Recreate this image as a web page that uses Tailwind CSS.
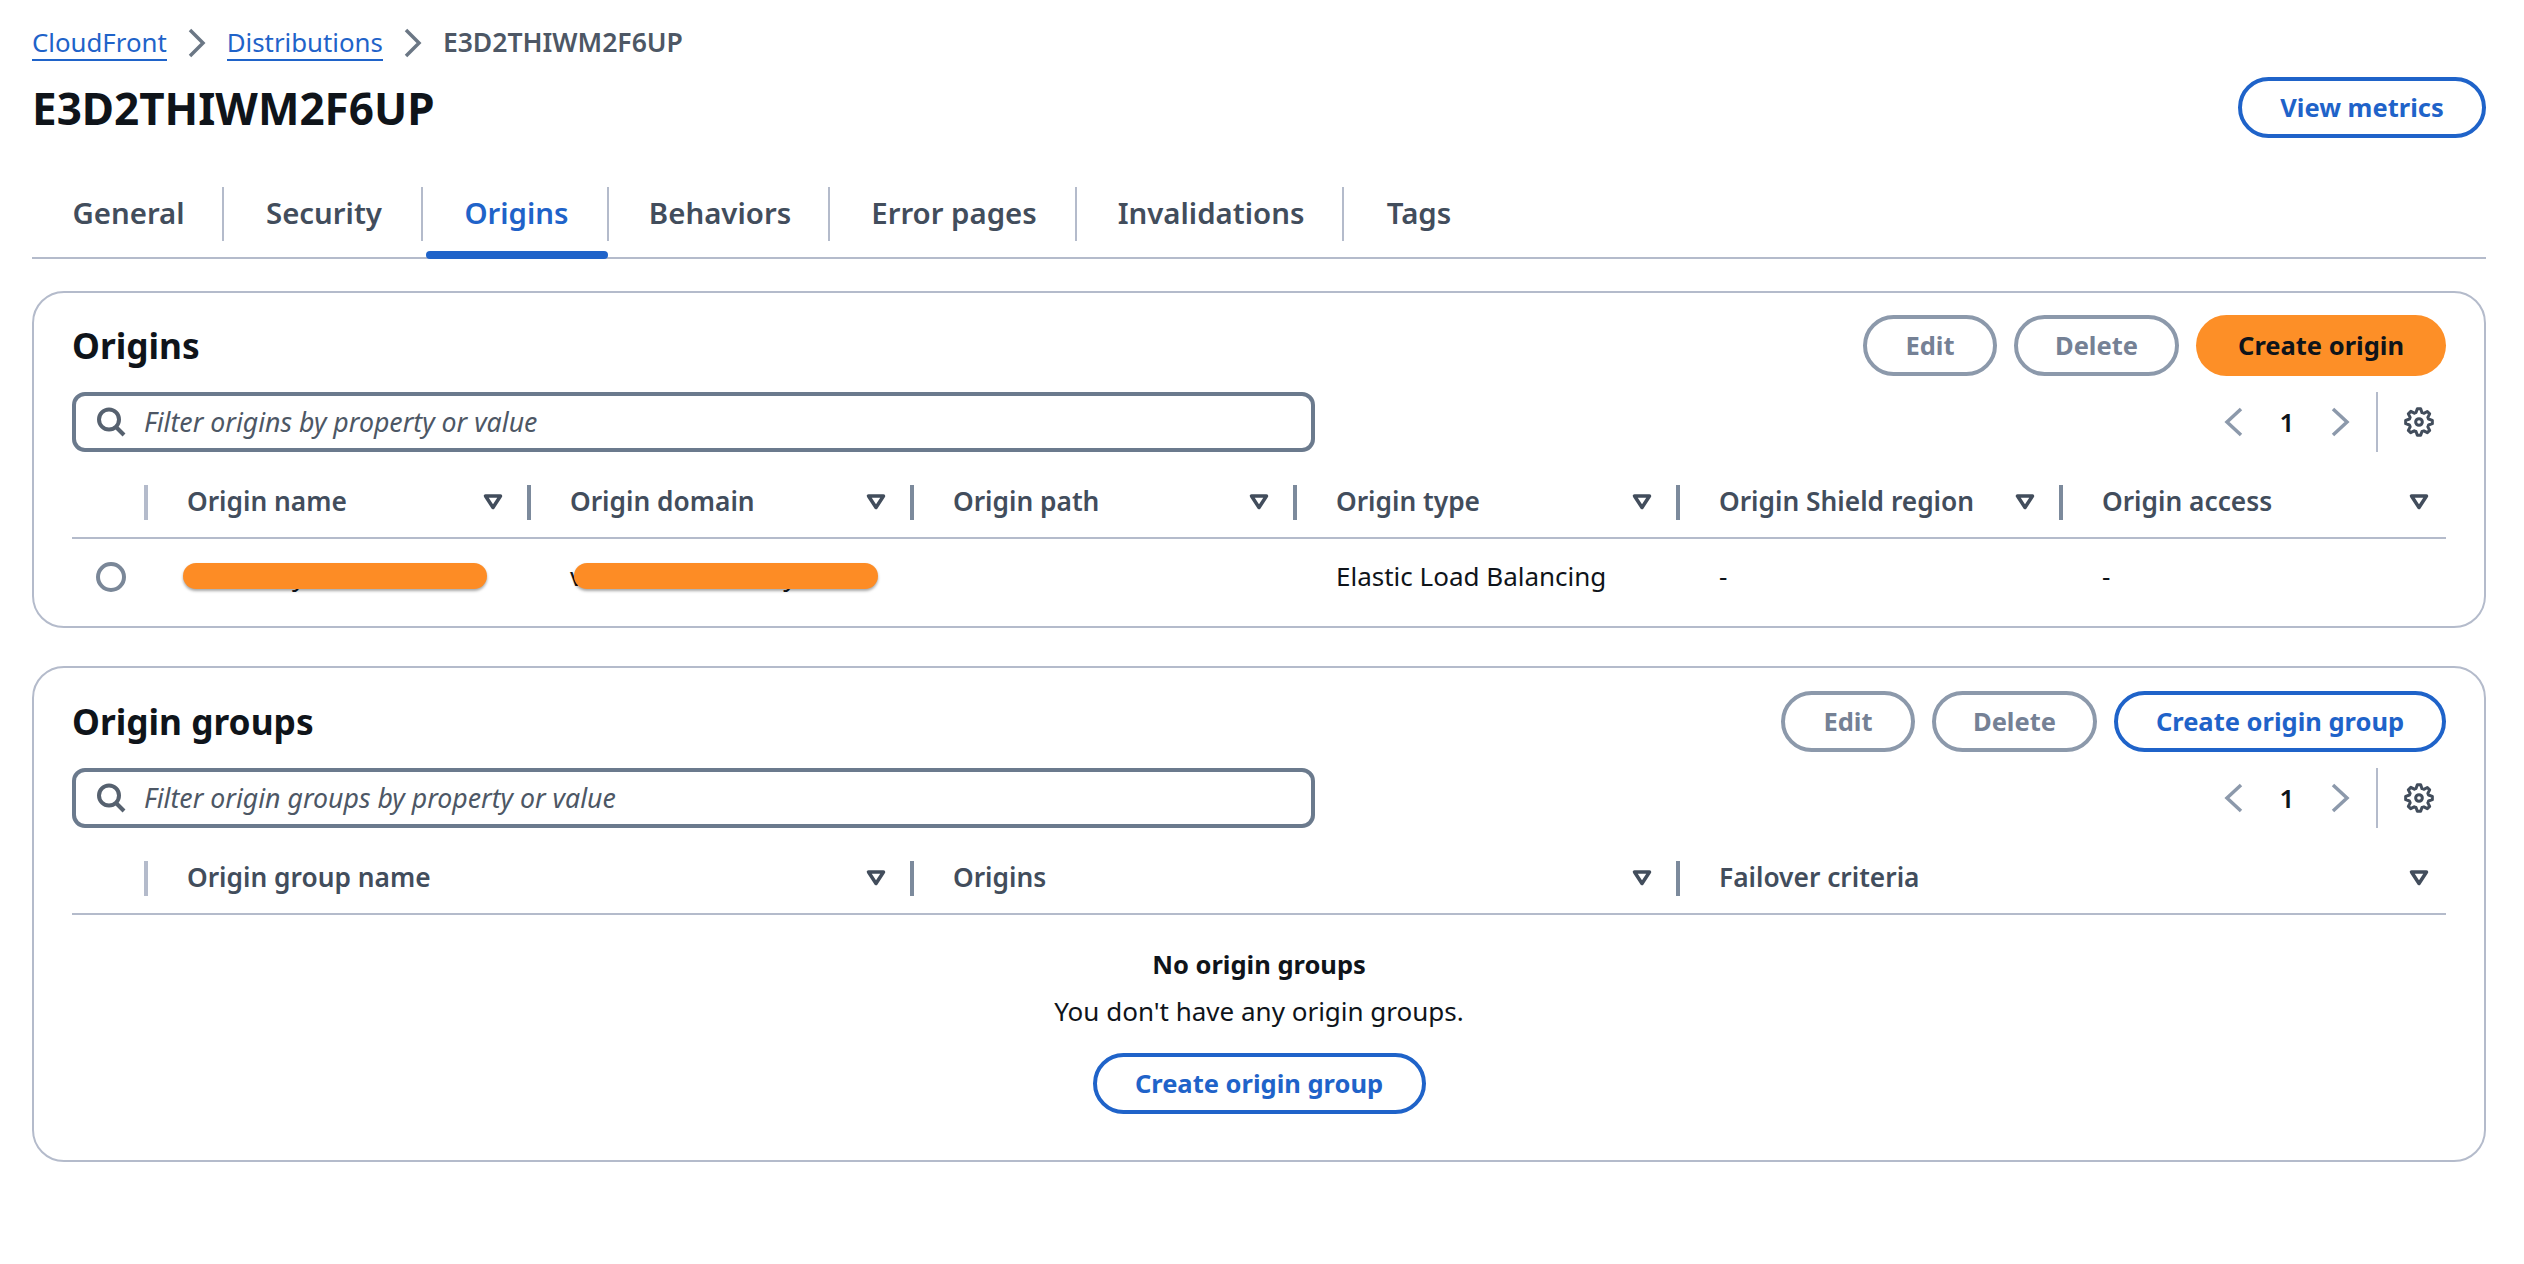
<!DOCTYPE html>
<html lang="en">
<head>
  <meta charset="UTF-8" />
  <title>E3D2THIWM2F6UP - CloudFront</title>
  <script src="https://cdn.jsdelivr.net/npm/@tailwindcss/browser@4"></script>
</head>
<body class="bg-white font-['Noto_Sans',sans-serif] text-[26px] text-[#0f141a]">
  <div class="pl-8 pr-[38px] pt-[24px]">

    <!-- Breadcrumb -->
    <nav class="flex items-center h-[38px] text-[#424650] font-medium">
      <a href="#" class="text-[#1f63c9] text-[25.8px] font-normal border-b-2 border-[#1f63c9] leading-[34px]">CloudFront</a>
      <svg class="mx-[21px] w-[18px] h-[30px]" viewBox="0 0 18 30" fill="none" stroke="#6b7785" stroke-width="3.5"><path d="M2 2l13 13L2 28" /></svg>
      <a href="#" class="text-[#1f63c9] text-[25.8px] font-normal border-b-2 border-[#1f63c9] leading-[34px]">Distributions</a>
      <svg class="mx-[21px] w-[18px] h-[30px]" viewBox="0 0 18 30" fill="none" stroke="#6b7785" stroke-width="3.5"><path d="M2 2l13 13L2 28" /></svg>
      <span class="font-semibold text-[26.5px] text-[#4d5765]">E3D2THIWM2F6UP</span>
    </nav>

    <!-- Title -->
    <div class="flex items-start justify-between h-[61px] mt-[15px]">
      <h1 class="text-[44px] font-bold leading-[63px]">E3D2THIWM2F6UP</h1>
      <button class="h-[61px] w-[248px] rounded-full border-[4px] border-[#1f63c9] text-[#1f63c9] font-bold text-[25.5px]">View metrics</button>
    </div>

    <!-- Tabs -->
    <div class="flex h-[73px] mt-[48px] items-center border-b-2 border-[#b4bbcb] font-semibold text-[#424d5c] text-[29.4px] relative">
      <a href="#" class="w-[192px] h-[54px] pl-[3px] flex items-center justify-center border-r-2 border-[#b4bbcb] -mt-[16px]">General</a>
      <a href="#" class="w-[199px] h-[54px] pl-[3px] flex items-center justify-center border-r-2 border-[#b4bbcb] -mt-[16px]">Security</a>
      <a href="#" class="w-[186px] h-[54px] pl-[3px] flex items-center justify-center border-r-2 border-[#b4bbcb] -mt-[16px] text-[#1f63c9]">Origins</a>
      <a href="#" class="w-[221px] h-[54px] pl-[3px] flex items-center justify-center border-r-2 border-[#b4bbcb] -mt-[16px]">Behaviors</a>
      <a href="#" class="w-[247px] h-[54px] pl-[3px] flex items-center justify-center border-r-2 border-[#b4bbcb] -mt-[16px]">Error pages</a>
      <a href="#" class="w-[267px] h-[54px] pl-[3px] flex items-center justify-center border-r-2 border-[#b4bbcb] -mt-[16px]">Invalidations</a>
      <a href="#" class="w-[147px] h-[54px] pl-[3px] flex items-center justify-center -mt-[16px]">Tags</a>
      <div class="absolute left-[394px] -bottom-[2px] w-[182px] h-[8px] rounded-full bg-[#1f63c9]"></div>
    </div>

    <!-- Origins -->
    <section class="mt-[32px] h-[337px] border-2 border-[#b4bbcb] rounded-[32px] px-[38px] pt-[22px]">
      <div class="flex items-center justify-between h-[61px]">
        <h2 class="text-[35.3px] font-bold">Origins</h2>
        <div class="flex gap-[17px] font-bold text-[25.5px]">
          <button class="h-[61px] w-[134px] rounded-full border-[4px] border-[#8c99ab] text-[#758195]">Edit</button>
          <button class="h-[61px] w-[165px] rounded-full border-[4px] border-[#8c99ab] text-[#758195]">Delete</button>
          <button class="h-[61px] w-[250px] rounded-full bg-[#fd8f27]">Create origin</button>
        </div>
      </div>

      <div class="flex items-center justify-between mt-[16px]">
        <div class="w-[1243px] h-[60px] border-[4px] border-[#6b7a8d] rounded-[13px] flex items-center pl-[20px] gap-[18px] italic text-[26.7px] text-[#4d5765]">
          <svg class="w-[30px] h-[30px] shrink-0" viewBox="0 0 30 30" fill="none" stroke="#56616f" stroke-width="4"><circle cx="13" cy="12.5" r="10" /><path d="M20 20l8 8" /></svg>
          <span>Filter origins by property or value</span>
        </div>
        <div class="flex items-center h-[60px]">
          <svg class="w-[20px] h-[30px]" viewBox="0 0 20 30" fill="none" stroke="#8c99ab" stroke-width="3.5"><path d="M17 2L3 15l14 13" /></svg>
          <span class="w-[86px] text-center font-semibold">1</span>
          <svg class="w-[20px] h-[30px]" viewBox="0 0 20 30" fill="none" stroke="#8c99ab" stroke-width="3.5"><path d="M3 2l14 13L3 28" /></svg>
          <div class="ml-[26px] h-[60px] border-l-2 border-[#b4bbcb]"></div>
          <svg class="ml-[26px] mr-[12px] w-[30px] h-[30px]" viewBox="-1 -1 18 18" fill="none" stroke="#424d5c" stroke-width="1.8" stroke-linejoin="round"><path d="M13.3 5.2l1.1-2.1L13 1.7l-2.1 1.1c-.3-.2-.7-.3-1.1-.4L9 0H7l-.8 2.3c-.3.1-.7.2-1 .4L3.1 1.6 1.6 3.1l1.1 2.1c-.2.3-.3.7-.4 1L0 7v2l2.3.8c.1.4.3.7.4 1.1l-1.1 2.1 1.4 1.4 2.1-1.1c.3.2.7.3 1.1.4L7 16h2l.8-2.3c.4-.1.7-.3 1.1-.4l2.1 1.1 1.4-1.4-1.1-2.1c.2-.3.3-.7.4-1.1L16 9V7l-2.3-.8c-.1-.3-.2-.7-.4-1z" /><circle cx="8" cy="8" r="2" /></svg>
        </div>
      </div>

      <!-- Table head -->
      <div class="grid grid-cols-[74px_repeat(5,383px)_1fr] h-[72px] mt-[15px] border-b-2 border-[#b4bbcb] font-semibold text-[26.3px] text-[#424d5c]">
        <div class="flex items-center justify-end"><i class="-mr-[2px] w-[4px] h-[35px] bg-[#b4bbcb]"></i></div>
        <div class="flex items-center pl-[41px] pr-[26px] justify-between relative">Origin name
          <svg class="w-[20px] h-[16px]" viewBox="0 0 20 16" fill="none" stroke="#424d5c" stroke-width="3.5" stroke-linejoin="round"><path d="M2.5 2h15L10 13.5z" /></svg><i class="absolute right-[-2px] w-[4px] h-[35px] bg-[#7c8a9c]"></i></div>
        <div class="flex items-center pl-[41px] pr-[26px] justify-between relative">Origin domain
          <svg class="w-[20px] h-[16px]" viewBox="0 0 20 16" fill="none" stroke="#424d5c" stroke-width="3.5" stroke-linejoin="round"><path d="M2.5 2h15L10 13.5z" /></svg><i class="absolute right-[-2px] w-[4px] h-[35px] bg-[#7c8a9c]"></i></div>
        <div class="flex items-center pl-[41px] pr-[26px] justify-between relative">Origin path
          <svg class="w-[20px] h-[16px]" viewBox="0 0 20 16" fill="none" stroke="#424d5c" stroke-width="3.5" stroke-linejoin="round"><path d="M2.5 2h15L10 13.5z" /></svg><i class="absolute right-[-2px] w-[4px] h-[35px] bg-[#7c8a9c]"></i></div>
        <div class="flex items-center pl-[41px] pr-[26px] justify-between relative">Origin type
          <svg class="w-[20px] h-[16px]" viewBox="0 0 20 16" fill="none" stroke="#424d5c" stroke-width="3.5" stroke-linejoin="round"><path d="M2.5 2h15L10 13.5z" /></svg><i class="absolute right-[-2px] w-[4px] h-[35px] bg-[#7c8a9c]"></i></div>
        <div class="flex items-center pl-[41px] pr-[26px] justify-between relative">Origin Shield region
          <svg class="w-[20px] h-[16px]" viewBox="0 0 20 16" fill="none" stroke="#424d5c" stroke-width="3.5" stroke-linejoin="round"><path d="M2.5 2h15L10 13.5z" /></svg><i class="absolute right-[-2px] w-[4px] h-[35px] bg-[#7c8a9c]"></i></div>
        <div class="flex items-center pl-[41px] pr-[17px] justify-between">Origin access
          <svg class="w-[20px] h-[16px]" viewBox="0 0 20 16" fill="none" stroke="#424d5c" stroke-width="3.5" stroke-linejoin="round"><path d="M2.5 2h15L10 13.5z" /></svg></div>
      </div>

      <!-- Table row -->
      <div class="grid grid-cols-[74px_repeat(5,383px)_1fr] h-[75px] items-center">
        <div><span class="block ml-[24px] w-[30px] h-[30px] rounded-full border-[4px] border-[#7a8798]"></span></div>
        <div class="relative h-full flex items-center pl-[41px]">
          <span class="ml-[105px]">y</span>
          <div class="absolute left-[37px] top-[24px] w-[304px] h-[26px] rounded-full bg-[#fd8c25] shadow-[0_2px_3px_rgba(0,0,0,0.35)]"></div>
        </div>
        <div class="relative h-full flex items-center pl-[41px]">
          <span>v</span><span class="ml-[200px]">y</span>
          <div class="absolute left-[45px] top-[24px] w-[304px] h-[26px] rounded-full bg-[#fd8c25] shadow-[0_2px_3px_rgba(0,0,0,0.35)]"></div>
        </div>
        <div></div>
        <div class="pl-[41px]">Elastic Load Balancing</div>
        <div class="pl-[41px]">-</div>
        <div class="pl-[41px]">-</div>
      </div>
    </section>

    <!-- Origin groups -->
    <section class="mt-[38px] h-[496px] border-2 border-[#b4bbcb] rounded-[32px] px-[38px] pt-[23px]">
      <div class="flex items-center justify-between h-[61px]">
        <h2 class="text-[35.3px] font-bold">Origin groups</h2>
        <div class="flex gap-[17px] font-bold text-[25.5px]">
          <button class="h-[61px] w-[134px] rounded-full border-[4px] border-[#8c99ab] text-[#758195]">Edit</button>
          <button class="h-[61px] w-[165px] rounded-full border-[4px] border-[#8c99ab] text-[#758195]">Delete</button>
          <button class="h-[61px] w-[332px] rounded-full border-[4px] border-[#1f63c9] text-[#1f63c9]">Create origin group</button>
        </div>
      </div>

      <div class="flex items-center justify-between mt-[16px]">
        <div class="w-[1243px] h-[60px] border-[4px] border-[#6b7a8d] rounded-[13px] flex items-center pl-[20px] gap-[18px] italic text-[26.7px] text-[#4d5765]">
          <svg class="w-[30px] h-[30px] shrink-0" viewBox="0 0 30 30" fill="none" stroke="#56616f" stroke-width="4"><circle cx="13" cy="12.5" r="10" /><path d="M20 20l8 8" /></svg>
          <span>Filter origin groups by property or value</span>
        </div>
        <div class="flex items-center h-[60px]">
          <svg class="w-[20px] h-[30px]" viewBox="0 0 20 30" fill="none" stroke="#8c99ab" stroke-width="3.5"><path d="M17 2L3 15l14 13" /></svg>
          <span class="w-[86px] text-center font-semibold">1</span>
          <svg class="w-[20px] h-[30px]" viewBox="0 0 20 30" fill="none" stroke="#8c99ab" stroke-width="3.5"><path d="M3 2l14 13L3 28" /></svg>
          <div class="ml-[26px] h-[60px] border-l-2 border-[#b4bbcb]"></div>
          <svg class="ml-[26px] mr-[12px] w-[30px] h-[30px]" viewBox="-1 -1 18 18" fill="none" stroke="#424d5c" stroke-width="1.8" stroke-linejoin="round"><path d="M13.3 5.2l1.1-2.1L13 1.7l-2.1 1.1c-.3-.2-.7-.3-1.1-.4L9 0H7l-.8 2.3c-.3.1-.7.2-1 .4L3.1 1.6 1.6 3.1l1.1 2.1c-.2.3-.3.7-.4 1L0 7v2l2.3.8c.1.4.3.7.4 1.1l-1.1 2.1 1.4 1.4 2.1-1.1c.3.2.7.3 1.1.4L7 16h2l.8-2.3c.4-.1.7-.3 1.1-.4l2.1 1.1 1.4-1.4-1.1-2.1c.2-.3.3-.7.4-1.1L16 9V7l-2.3-.8c-.1-.3-.2-.7-.4-1z" /><circle cx="8" cy="8" r="2" /></svg>
        </div>
      </div>

      <div class="grid grid-cols-[74px_766px_766px_1fr] h-[72px] mt-[15px] border-b-2 border-[#b4bbcb] font-semibold text-[26.3px] text-[#424d5c]">
        <div class="flex items-center justify-end"><i class="-mr-[2px] w-[4px] h-[35px] bg-[#b4bbcb]"></i></div>
        <div class="flex items-center pl-[41px] pr-[26px] justify-between relative">Origin group name
          <svg class="w-[20px] h-[16px]" viewBox="0 0 20 16" fill="none" stroke="#424d5c" stroke-width="3.5" stroke-linejoin="round"><path d="M2.5 2h15L10 13.5z" /></svg><i class="absolute right-[-2px] w-[4px] h-[35px] bg-[#7c8a9c]"></i></div>
        <div class="flex items-center pl-[41px] pr-[26px] justify-between relative">Origins
          <svg class="w-[20px] h-[16px]" viewBox="0 0 20 16" fill="none" stroke="#424d5c" stroke-width="3.5" stroke-linejoin="round"><path d="M2.5 2h15L10 13.5z" /></svg><i class="absolute right-[-2px] w-[4px] h-[35px] bg-[#7c8a9c]"></i></div>
        <div class="flex items-center pl-[41px] pr-[17px] justify-between">Failover criteria
          <svg class="w-[20px] h-[16px]" viewBox="0 0 20 16" fill="none" stroke="#424d5c" stroke-width="3.5" stroke-linejoin="round"><path d="M2.5 2h15L10 13.5z" /></svg></div>
      </div>

      <!-- Empty state -->
      <div class="flex flex-col items-center pt-[27px]">
        <p class="font-bold text-[25.5px] leading-[45px]">No origin groups</p>
        <p class="leading-[48px]">You don't have any origin groups.</p>
        <button class="mt-[18px] h-[61px] w-[333px] rounded-full border-[4px] border-[#1f63c9] text-[#1f63c9] font-bold text-[25.5px]">Create origin group</button>
      </div>
    </section>
  </div>
</body>
</html>
